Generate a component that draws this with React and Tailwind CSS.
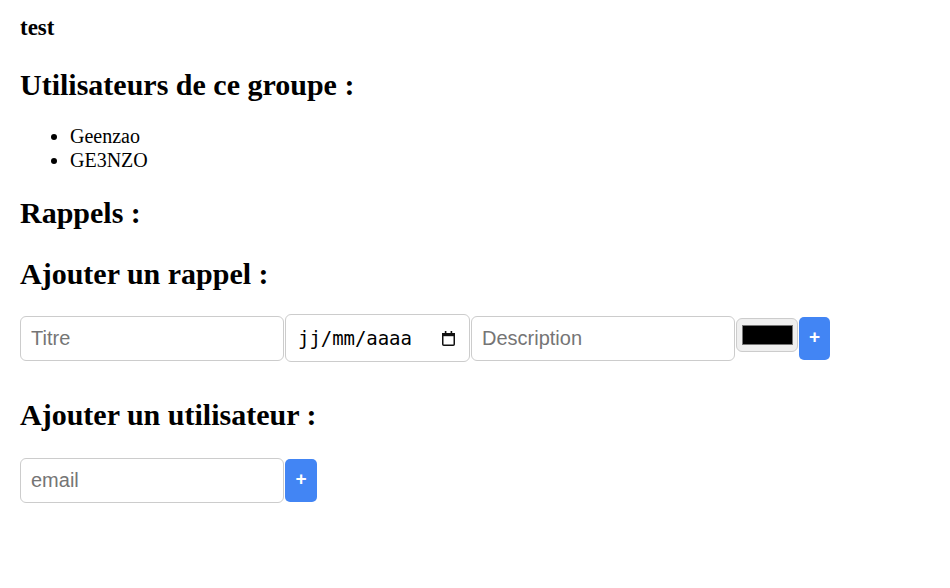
import { useState } from 'react'

const serif = "font-['Liberation_Serif','Times_New_Roman',serif]"
const sans = "font-['Liberation_Sans',Arial,sans-serif]"

const CalendarIcon = () => (
    <svg width="13" height="16" viewBox="0 0 13 16" className="shrink-0">
        <rect x="0.75" y="3.75" width="11.5" height="11.5" rx="1" fill="none" stroke="#111" strokeWidth="1.5" />
        <rect x="0" y="3" width="13" height="3.2" fill="#111" />
        <rect x="2.8" y="1" width="1.6" height="3" fill="#111" />
        <rect x="8.6" y="1" width="1.6" height="3" fill="#111" />
    </svg>
)

const TextField = ({ placeholder, value, onChange, className = "" }) => (
    <input
        type="text"
        placeholder={placeholder}
        value={value}
        onChange={onChange}
        className={`${sans} h-[45px] w-[264px] shrink-0 rounded-[6px] border border-[#cccccc] bg-white px-[10px] text-[20px] text-black outline-none placeholder:text-[#757575] ${className}`}
    />
)

const PlusButton = ({ className = "" }) => (
    <button className={`${sans} flex w-[31px] shrink-0 items-center justify-center rounded-[5px] bg-[#4285f4] pb-[2px] text-[19px] font-bold text-white ${className}`}>
        +
    </button>
)

const App = () => {
    const users = ["Geenzao", "GE3NZO"]
    const [reminder, setReminder] = useState({ titre: "", description: "" })
    const [email, setEmail] = useState("")

    const onChange = (e) => {
        const { name, value } = e.target
        setReminder(prev => ({ ...prev, [name]: value }))
    }

    return (
        <div className={`${serif} min-h-[588px] w-full bg-white px-[20px] pt-[15px] text-black`}>
            <div className="text-[23px] font-bold leading-[26px]">test</div>

            <h2 className="mt-[27px] text-[30px] font-bold leading-[34px]">Utilisateurs de ce groupe :</h2>
            <ul className="mt-[22px] list-disc pl-[50px] text-[20px] leading-[24px]">
                {users.map(user => (
                    <li key={user}>{user}</li>
                ))}
            </ul>

            <h2 className="mt-[24px] text-[30px] font-bold leading-[34px]">Rappels :</h2>

            <h2 className="mt-[27px] text-[30px] font-bold leading-[34px]">Ajouter un rappel :</h2>
            <div className="mt-[23px] flex items-start gap-[1px]">
                <TextField
                    placeholder="Titre"
                    className="mt-[2px]"
                    value={reminder.titre}
                    onChange={(e) => onChange({ target: { name: "titre", value: e.target.value } })}
                />
                <div className="flex h-[48px] w-[185px] shrink-0 items-center justify-between rounded-[6px] border border-[#cccccc] bg-white pl-[12px] pr-[14px]">
                    <span className="font-['DejaVu_Sans_Mono',monospace] text-[19px] tracking-[-0.05px] text-black">jj/mm/aaaa</span>
                    <CalendarIcon />
                </div>
                <TextField
                    placeholder="Description"
                    className="mt-[2px] w-[263px]"
                    value={reminder.description}
                    onChange={(e) => onChange({ target: { name: "description", value: e.target.value } })}
                />
                <div className="mt-[4px] flex h-[34px] w-[62px] shrink-0 items-center justify-center rounded-[6px] border border-[#cccccc] bg-[#efefef]">
                    <div className="h-[20px] w-[51px] border border-[#777777] bg-black"></div>
                </div>
                <PlusButton className="mt-[3px] h-[43px]" />
            </div>

            <h2 className="mt-[36px] text-[30px] font-bold leading-[34px]">Ajouter un utilisateur :</h2>
            <div className="mt-[26px] flex items-start gap-[1px]">
                <TextField placeholder="email" value={email} onChange={(e) => setEmail(e.target.value)} />
                <PlusButton className="mt-[1px] h-[43px] w-[32px]" />
            </div>
        </div>
    )
}

export default App
